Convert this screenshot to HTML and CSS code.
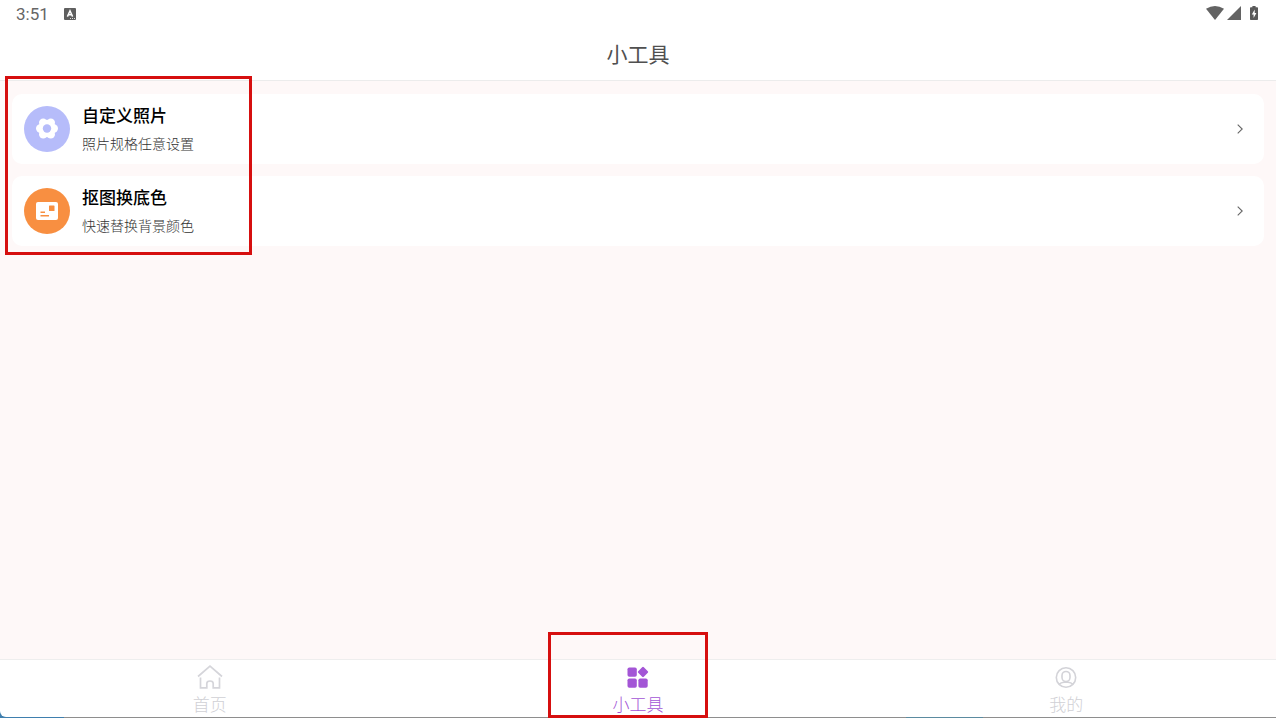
FILE: index.html
```html
<!DOCTYPE html>
<html lang="zh-CN">
<head>
    <meta charset="UTF-8">
    <meta name="viewport" content="width=device-width, initial-scale=1.0">
    <title>小工具</title>
    <link rel="stylesheet" href="styles.css">
</head>
<body>
    <div class="status-bar">
        <span class="time">3:51</span>
        <svg class="notice" width="12" height="12" viewBox="0 0 12 12">
            <rect width="12" height="12" rx="1" fill="#5f5f5f"/>
            <path d="M3.4 8.6L6 2.8L8.6 8.6M4.4 6.8H7.6" fill="none" stroke="#fff" stroke-width="1.5"/>
            <path d="M6 10.5H7M8 10.5H9M10 10.5H11" stroke="#ddd" stroke-width="1"/>
        </svg>
        <div class="status-icons">
            <svg width="18" height="14" viewBox="0 0 18 14">
                <path d="M0 2.8Q9 -2.8 18 2.8L9 14Z" fill="#636363"/>
            </svg>
            <svg width="14" height="14" viewBox="0 0 14 14">
                <path d="M14 0V14H0Z" fill="#636363"/>
            </svg>
            <svg class="battery" width="8" height="14" viewBox="0 0 8 14">
                <path d="M2.4 0H5.6V1.3H7.2Q8 1.3 8 2.1V13.2Q8 14 7.2 14H.8Q0 14 0 13.2V2.1Q0 1.3 .8 1.3H2.4Z" fill="#5a5a5a"/>
                <path d="M4.7 3.6L1.8 8.4H3.6V12L6.4 7H4.7Z" fill="#fff"/>
            </svg>
        </div>
    </div>

    <header class="title-bar">
        <h1>小工具</h1>
    </header>

    <main class="content">
        <a class="card" href="#custom">
            <svg class="card-icon" width="46" height="46" viewBox="0 0 46 46">
                <circle cx="23" cy="23" r="23" fill="#b6bcfa"/>
                <g fill="#fff">
                    <circle cx="23" cy="22.5" r="8.8"/>
                    <circle cx="16.2" cy="22.5" r="4.2"/>
                    <circle cx="29.8" cy="22.5" r="4.2"/>
                    <circle cx="19.2" cy="16.6" r="4.2"/>
                    <circle cx="26.8" cy="16.6" r="4.2"/>
                    <circle cx="19.2" cy="28.4" r="4.2"/>
                    <circle cx="26.8" cy="28.4" r="4.2"/>
                </g>
                <circle cx="23" cy="22.5" r="4.2" fill="#b6bcfa"/>
            </svg>
            <div class="card-text">
                <h2>自定义照片</h2>
                <p>照片规格任意设置</p>
            </div>
            <svg class="arrow" width="6" height="10" viewBox="0 0 6 10">
                <path d="M.7 .6L5.2 5L.7 9.4"/>
            </svg>
        </a>
        <a class="card" href="#background">
            <svg class="card-icon" width="46" height="46" viewBox="0 0 46 46">
                <circle cx="23" cy="23" r="23" fill="#f88f41"/>
                <rect x="12" y="14" width="22" height="18" rx="2" fill="#fff"/>
                <rect x="25" y="17.5" width="5.5" height="5.5" rx=".6" fill="#f88f41"/>
                <path d="M16.5 24.3H21M16.5 27.7H25" stroke="#f88f41" stroke-width="1.4" fill="none"/>
            </svg>
            <div class="card-text">
                <h2>抠图换底色</h2>
                <p>快速替换背景颜色</p>
            </div>
            <svg class="arrow" width="6" height="10" viewBox="0 0 6 10">
                <path d="M.7 .6L5.2 5L.7 9.4"/>
            </svg>
        </a>
    </main>

    <div class="bottom">
        <nav class="tab-bar">
            <a class="tab" href="#home">
                <svg width="26" height="24" viewBox="0 0 26 24" fill="none" stroke="#d5d5da" stroke-width="1.7">
                    <path d="M1 11.5L13 1.2L25 11.5"/>
                    <path d="M3.5 12.5V22.8H9.8V18.6Q9.8 16 13 16T16.2 18.6V22.8H22.5V12.5"/>
                </svg>
                <span>首页</span>
            </a>
            <a class="tab active" href="#tools">
                <svg width="26" height="24" viewBox="0 0 26 24" fill="#a355d6">
                    <rect x="2.5" y="2.5" width="9.3" height="9.3" rx="1.8"/>
                    <rect x="2.5" y="13.4" width="9.3" height="9.3" rx="1.8"/>
                    <rect x="13.4" y="13.4" width="9.3" height="9.3" rx="1.8"/>
                    <rect x="14" y="3" width="8" height="8" rx="1.2" transform="rotate(45 18 7)"/>
                </svg>
                <span>小工具</span>
            </a>
            <a class="tab" href="#mine">
                <svg width="26" height="24" viewBox="0 0 26 24" fill="none" stroke="#d3d3d8" stroke-width="1.6">
                    <circle cx="13" cy="12.5" r="9.7"/>
                    <rect x="9" y="6.5" width="8" height="10" rx="4"/>
                    <path d="M6 19.3Q8 17.6 11 17.3H15Q18 17.6 20 19.3"/>
                </svg>
                <span>我的</span>
            </a>
        </nav>
    </div>

    <div class="mark mark-list"></div>
    <div class="mark mark-tab"></div>
</body>
</html>
```
FILE: styles.css
```css
* {
    box-sizing: border-box;
}

body {
    position: relative;
    display: flex;
    flex-direction: column;
    min-height: 100vh;
    margin: 0;
    background-color: #fef8f8;
    font-family: "Noto Sans CJK SC", sans-serif;
}

h1, h2, p {
    margin: 0;
}

a {
    color: inherit;
    text-decoration: none;
}

svg {
    display: block;
    flex: none;
}

.status-bar {
    display: flex;
    align-items: center;
    height: 30px;
    padding: 0 18px 2px 16px;
    background-color: #fff;
}

.time {
    color: #666;
    font-family: Roboto, sans-serif;
    font-size: 17px;
    line-height: 20px;
}

.notice {
    margin-left: 15px;
}

.status-icons {
    display: flex;
    gap: 3px;
    margin-left: auto;
    padding-bottom: 2px;
}

.battery {
    margin-left: 6px;
}

.title-bar {
    height: 51px;
    border-bottom: 1px solid #ececec;
    background-color: #fff;
    text-align: center;
}

.title-bar h1 {
    color: #505050;
    font-size: 21px;
    font-weight: 400;
    line-height: 46px;
}

.content {
    display: flex;
    flex: 1;
    flex-direction: column;
    gap: 12px;
    padding: 13px 12px;
}

.card {
    display: flex;
    align-items: center;
    padding: 7px 21px 7px 12px;
    border-radius: 10px;
    background-color: #fff;
}

.card-text {
    margin-left: 12px;
}

.card-text h2 {
    color: #000;
    font-size: 17px;
    font-weight: 500;
    line-height: 28px;
}

.card-text p {
    color: #333;
    font-size: 14px;
    font-weight: 300;
    line-height: 28px;
}

.arrow {
    margin-left: auto;
    fill: none;
    stroke: #666;
    stroke-width: 1.1;
}

/* thin line under the tabs, with the desktop showing through */
.bottom {
    padding-bottom: 1px;
    background: linear-gradient(to right, #3f7fae 5%, #8e8e8e 5%, #8e8e8e 71%, #5b8ba0 71%, #5b8ba0 77%, #8e8e8e 77%);
}

.tab-bar {
    display: flex;
    height: 58px;
    border-top: 1px solid #eee;
    border-bottom-left-radius: 6px;
    background-color: #fff;
}

.tab {
    display: flex;
    flex: auto;
    flex-direction: column;
    gap: 1px;
    align-items: center;
    padding-top: 5px;
    color: #d0d0d5;
    font-size: 17px;
    font-weight: 300;
    line-height: 28px;
}

.tab.active {
    color: #a355d6;
}

/* red highlight frames */
.mark {
    position: absolute;
    border: 3px solid #d60f0f;
    pointer-events: none;
}

.mark-list {
    top: 76px;
    left: 5px;
    width: 247px;
    height: 179px;
}

.mark-tab {
    bottom: 0;
    left: calc(50% - 90px);
    width: 160px;
    height: 86px;
}
```
